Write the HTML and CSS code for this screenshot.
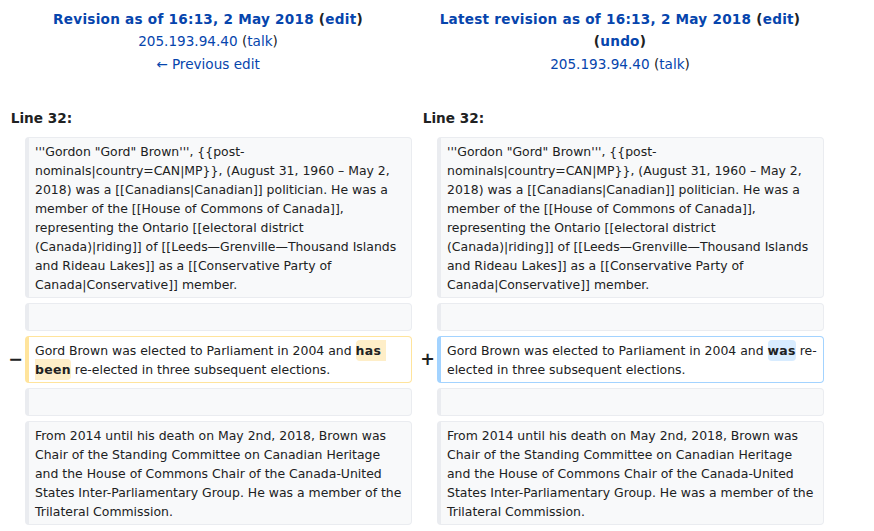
FILE: index.html
```html
<!DOCTYPE html>
<html lang="en">
<head>
<meta charset="utf-8">
<title>Gord Brown: Difference between revisions</title>
<link rel="stylesheet" href="styles.css">
</head>
<body>
<div class="diff">
  <div class="title">
    <div class="title-main"><a href="#">Revision as of 16:13, 2 May 2018</a> <span class="paren">(<a href="#">edit</a>)</span></div>
    <div><a href="#">205.193.94.40</a> <span class="paren">(<a href="#">talk</a>)</span></div>
    <div><a href="#">← Previous edit</a></div>
  </div>
  <div class="title">
    <div class="title-main"><a href="#">Latest revision as of 16:13, 2 May 2018</a> <span class="paren">(<a href="#">edit</a>)</span><br><span class="paren">(<a href="#">undo</a>)</span></div>
    <div><a href="#">205.193.94.40</a> <span class="paren">(<a href="#">talk</a>)</span></div>
  </div>

  <div class="lineno">Line 32:</div>
  <div class="lineno">Line 32:</div>

  <div class="marker"></div>
  <div class="cell context">'''Gordon "Gord" Brown''', {{post-nominals|country=CAN|MP}}, (August 31, 1960 – May 2, 2018) was a [[Canadians|Canadian]] politician. He was a member of the [[House of Commons of Canada]], representing the Ontario [[electoral district (Canada)|riding]] of [[Leeds—Grenville—Thousand Islands and Rideau Lakes]] as a [[Conservative Party of Canada|Conservative]] member.</div>
  <div class="marker"></div>
  <div class="cell context">'''Gordon "Gord" Brown''', {{post-nominals|country=CAN|MP}}, (August 31, 1960 – May 2, 2018) was a [[Canadians|Canadian]] politician. He was a member of the [[House of Commons of Canada]], representing the Ontario [[electoral district (Canada)|riding]] of [[Leeds—Grenville—Thousand Islands and Rideau Lakes]] as a [[Conservative Party of Canada|Conservative]] member.</div>

  <div class="marker"></div>
  <div class="cell context"><br></div>
  <div class="marker"></div>
  <div class="cell context"><br></div>

  <div class="marker">−</div>
  <div class="cell deleted">Gord Brown was elected to Parliament in 2004 and <del class="change">has been</del> re-elected in three subsequent elections.</div>
  <div class="marker">+</div>
  <div class="cell added">Gord Brown was elected to Parliament in 2004 and <ins class="change">was</ins> re-elected in three subsequent elections.</div>

  <div class="marker"></div>
  <div class="cell context"><br></div>
  <div class="marker"></div>
  <div class="cell context"><br></div>

  <div class="marker"></div>
  <div class="cell context">From 2014 until his death on May 2nd, 2018, Brown was Chair of the Standing Committee on Canadian Heritage and the House of Commons Chair of the Canada-United States Inter-Parliamentary Group. He was a member of the Trilateral Commission.</div>
  <div class="marker"></div>
  <div class="cell context">From 2014 until his death on May 2nd, 2018, Brown was Chair of the Standing Committee on Canadian Heritage and the House of Commons Chair of the Canada-United States Inter-Parliamentary Group. He was a member of the Trilateral Commission.</div>
</div>
</body>
</html>
```

FILE: styles.css
```css
html, body {
  margin: 0;
  padding: 0;
  background: #ffffff;
}

body {
  font-family: "DejaVu Sans", sans-serif;
  font-size: 13.6px;
  color: #202122;
}

a {
  color: #0645ad;
  text-decoration: none;
}

.diff {
  display: grid;
  grid-template-columns: 17px 387px 17px 387px;
  column-gap: 4px;
  row-gap: 5px;
  padding: 4px 0 0 4px;
  width: 828px;
  box-sizing: border-box;
}

.title {
  grid-column: span 2;
  text-align: center;
  line-height: 22.4px;
  padding: 4px 6.8px;
}

.title-main {
  font-weight: bold;
  letter-spacing: 0.25px;
}

.paren {
  color: #202122;
}

.lineno {
  grid-column: span 2;
  font-weight: bold;
  line-height: 22.4px;
  padding: 4.3px 6.8px 2.9px;
  margin-top: 18.5px;
}

.marker {
  display: flex;
  align-items: center;
  justify-content: flex-end;
  font-weight: bold;
  font-size: 17.5px;
  line-height: 1.2;
  margin-right: -2px;
}

.cell {
  font-size: 12.45px;
  line-height: 19px;
  padding: 3.5px 6px;
  border-style: solid;
  border-width: 1px 1px 1px 4px;
  border-radius: 4px;
  white-space: pre-wrap;
  overflow-wrap: break-word;
  min-width: 0;
}

.context {
  background: #f8f9fa;
  border-color: #eaecf0;
}

.deleted {
  background: #ffffff;
  border-color: #ffe49c;
}

.added {
  background: #ffffff;
  border-color: #a3d3ff;
}

.change {
  font-weight: bold;
  text-decoration: none;
  letter-spacing: 0.3px;
  border-radius: 4px;
  padding: 3px 0;
}

.deleted .change {
  background: #feeec8;
}

.added .change {
  background: #d8ecff;
}
```
